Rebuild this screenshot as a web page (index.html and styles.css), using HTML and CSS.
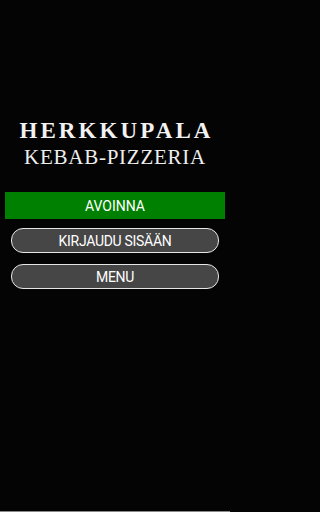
FILE: index.html
```html
<!DOCTYPE html>
<html lang="fi">
<head>
<meta charset="utf-8">
<title>Herkkupala Kebab-Pizzeria</title>
<link rel="stylesheet" href="styles.css">
</head>
<body>
<div class="screen">
  <header class="brand">
    <h1 class="brand-name">HERKKUPALA</h1>
    <p class="brand-sub">KEBAB-PIZZERIA</p>
  </header>
  <div class="status">AVOINNA</div>
  <nav class="actions">
    <button class="btn" type="button">KIRJAUDU SISÄÄN</button>
    <button class="btn" type="button">MENU</button>
  </nav>
</div>
</body>
</html>
```

FILE: styles.css
```css
html, body {
  margin: 0;
  padding: 0;
  background: #040404;
}

.screen {
  box-sizing: border-box;
  width: 230px;
  height: 512px;
  padding-top: 119px;
  border-bottom: 1px solid #8a8a8a;
  display: flex;
  flex-direction: column;
  align-items: center;
  color: #f4f4f4;
}

.brand {
  display: flex;
  flex-direction: column;
  align-items: center;
  text-align: center;
}

.brand-name {
  margin: 0;
  font-family: "Liberation Serif", "Times New Roman", serif;
  font-weight: bold;
  font-size: 23px;
  line-height: 23px;
  letter-spacing: 3.1px;
  padding-left: 3px;
  color: #f2f2f2;
}

.brand-sub {
  margin: 5px 0 0;
  font-family: "Liberation Serif", "Times New Roman", serif;
  font-weight: normal;
  font-size: 21px;
  line-height: 21px;
  letter-spacing: 0.75px;
  color: #eeeeee;
}

.status {
  box-sizing: border-box;
  width: 220px;
  height: 27px;
  margin-top: 24px;
  background: #008000;
  color: #ffffff;
  font-family: Roboto, "Liberation Sans", sans-serif;
  font-size: 14px;
  display: flex;
  align-items: center;
  justify-content: center;
}

.actions {
  margin-top: 9px;
  display: flex;
  flex-direction: column;
  gap: 11px;
}

.btn {
  box-sizing: border-box;
  width: 208px;
  height: 25px;
  padding: 0;
  border: 1.5px solid #e6e6e6;
  border-radius: 12px;
  background: #464646;
  color: #ffffff;
  font-family: Roboto, "Liberation Sans", sans-serif;
  font-size: 14px;
  letter-spacing: -0.3px;
  display: flex;
  align-items: center;
  justify-content: center;
}
```
